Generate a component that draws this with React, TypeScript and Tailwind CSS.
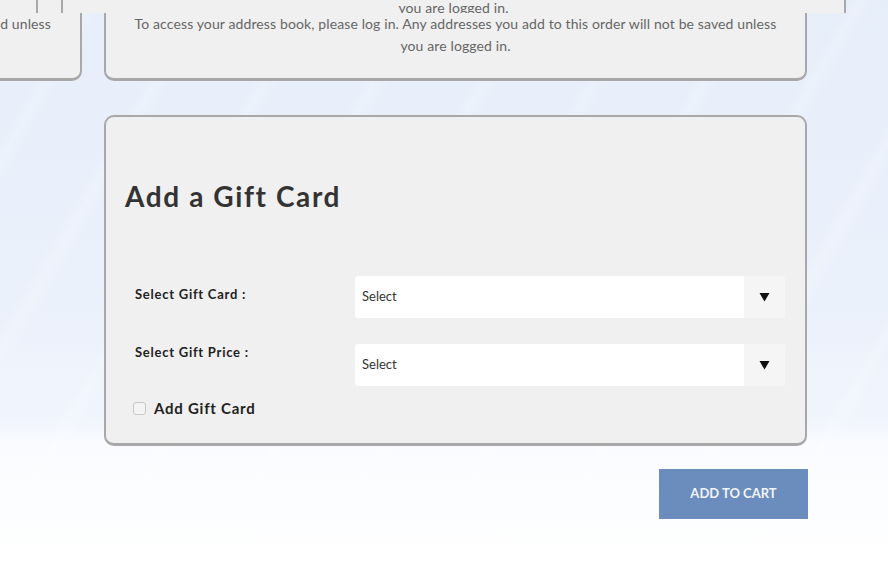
import { useState } from 'react';

const font = { fontFamily: 'Lato, "Liberation Sans", sans-serif' };

function Caret() {
  return (
    <svg width="11" height="10" viewBox="0 0 11 10" aria-hidden="true">
      <path d="M0.5 1 L10.5 1 L5.5 9.5 Z" fill="#111" />
    </svg>
  );
}

function SelectBox() {
  return (
    <div className="flex h-[42px] w-[430px] overflow-hidden rounded-[3px] bg-white">
      <div className="flex flex-1 items-center pl-[7px] text-[13px] text-[#333]">Select</div>
      <div className="flex w-[41px] items-center justify-center bg-[#f5f5f5]">
        <Caret />
      </div>
    </div>
  );
}

export default function App() {
  const [checked, setChecked] = useState(false);

  return (
    <div
      className="relative h-[568px] w-[888px] overflow-hidden bg-[linear-gradient(180deg,#e6eefa_0%,#ebf1fb_55%,#f1f5fd_74%,#f9fbfe_78%,#ffffff_100%)]"
      style={font}
    >
      {/* faint diagonal streaks */}
      <div className="pointer-events-none absolute inset-0 bg-[repeating-linear-gradient(120deg,rgba(255,255,255,0)_0px,rgba(255,255,255,0)_70px,rgba(255,255,255,0.18)_80px,rgba(255,255,255,0)_95px)]" />

      <div className="absolute left-0 top-0 z-10 flex h-[13px] w-full">
        <div className="h-full w-[38px] border-r-2 border-[#a8a8a8] bg-[#f0f0f0]" />
        <div className="ml-[23px] flex h-full w-[785px] justify-center overflow-hidden border-x-2 border-[#a8a8a8] bg-[#f0f0f0]">
          <span className="-mt-[3px] text-[14px] leading-[22px] tracking-[0.12px] text-[#666]">you are logged in.</span>
        </div>
      </div>

      {/* address cards (cut off at top) */}
      <div className="relative -mt-[32px] flex gap-[22px]">
        <div className="-ml-[300px] flex h-[113px] w-[382px] justify-end rounded-[10px] border-2 border-b-[3px] border-[#a8a8a8] bg-[#f0f0f0] pr-[29px] pt-[43px]">
          <p className="text-right text-[14px] leading-[22px] tracking-[0.12px] text-[#666]">will not be saved unless</p>
        </div>
        <div className="flex h-[113px] w-[703px] flex-col items-center rounded-[10px] border-2 border-b-[3px] border-[#a8a8a8] bg-[#f0f0f0] pt-[43px]">
          <p className="text-center text-[14px] leading-[22px] tracking-[0.12px] text-[#666]">
            To access your address book, please log in. Any addresses you add to this order will not be saved unless
            <br />
            you are logged in.
          </p>
        </div>
      </div>

      {/* gift card */}
      <div className="relative ml-[104px] mt-[34px] w-[703px] rounded-[10px] border-2 border-b-[3px] border-[#a8a8a8] bg-[#f0f0f0] pb-[23px] pl-[19px] pr-[20px] pt-[62px]">
        <h2 className="text-[28px] font-bold leading-[34px] tracking-[1.6px] text-[#333]">Add a Gift Card</h2>

        <div className="mt-[63px] flex flex-col gap-[26px] pl-[10px]">
          <div className="flex items-start justify-between">
            <label className="pt-[9px] text-[13px] font-bold tracking-[0.75px] text-[#222]">Select Gift Card :</label>
            <SelectBox />
          </div>
          <div className="flex items-start justify-between">
            <label className="-mt-[1px] text-[13px] font-bold tracking-[0.75px] text-[#222]">Select Gift Price :</label>
            <SelectBox />
          </div>
        </div>

        <label className="mt-[11px] flex cursor-pointer items-center gap-[8px] pl-[8px]">
          <input
            type="checkbox"
            checked={checked}
            onChange={(e) => setChecked(e.target.checked)}
            className="h-[13px] w-[13px] appearance-none rounded-[3px] border border-[#c8c8c8] bg-[#f4f4f4]"
          />
          <span className="text-[15px] font-bold tracking-[0.76px] text-[#222]">Add Gift Card</span>
        </label>
      </div>

      <div className="relative mt-[23px] flex w-[808px] justify-end">
        <button
          type="button"
          className="flex h-[50px] w-[149px] items-center justify-center bg-[#6a8dbd] text-[13px] font-bold text-[#f2f4f8]"
        >
          ADD TO CART
        </button>
      </div>
    </div>
  );
}
